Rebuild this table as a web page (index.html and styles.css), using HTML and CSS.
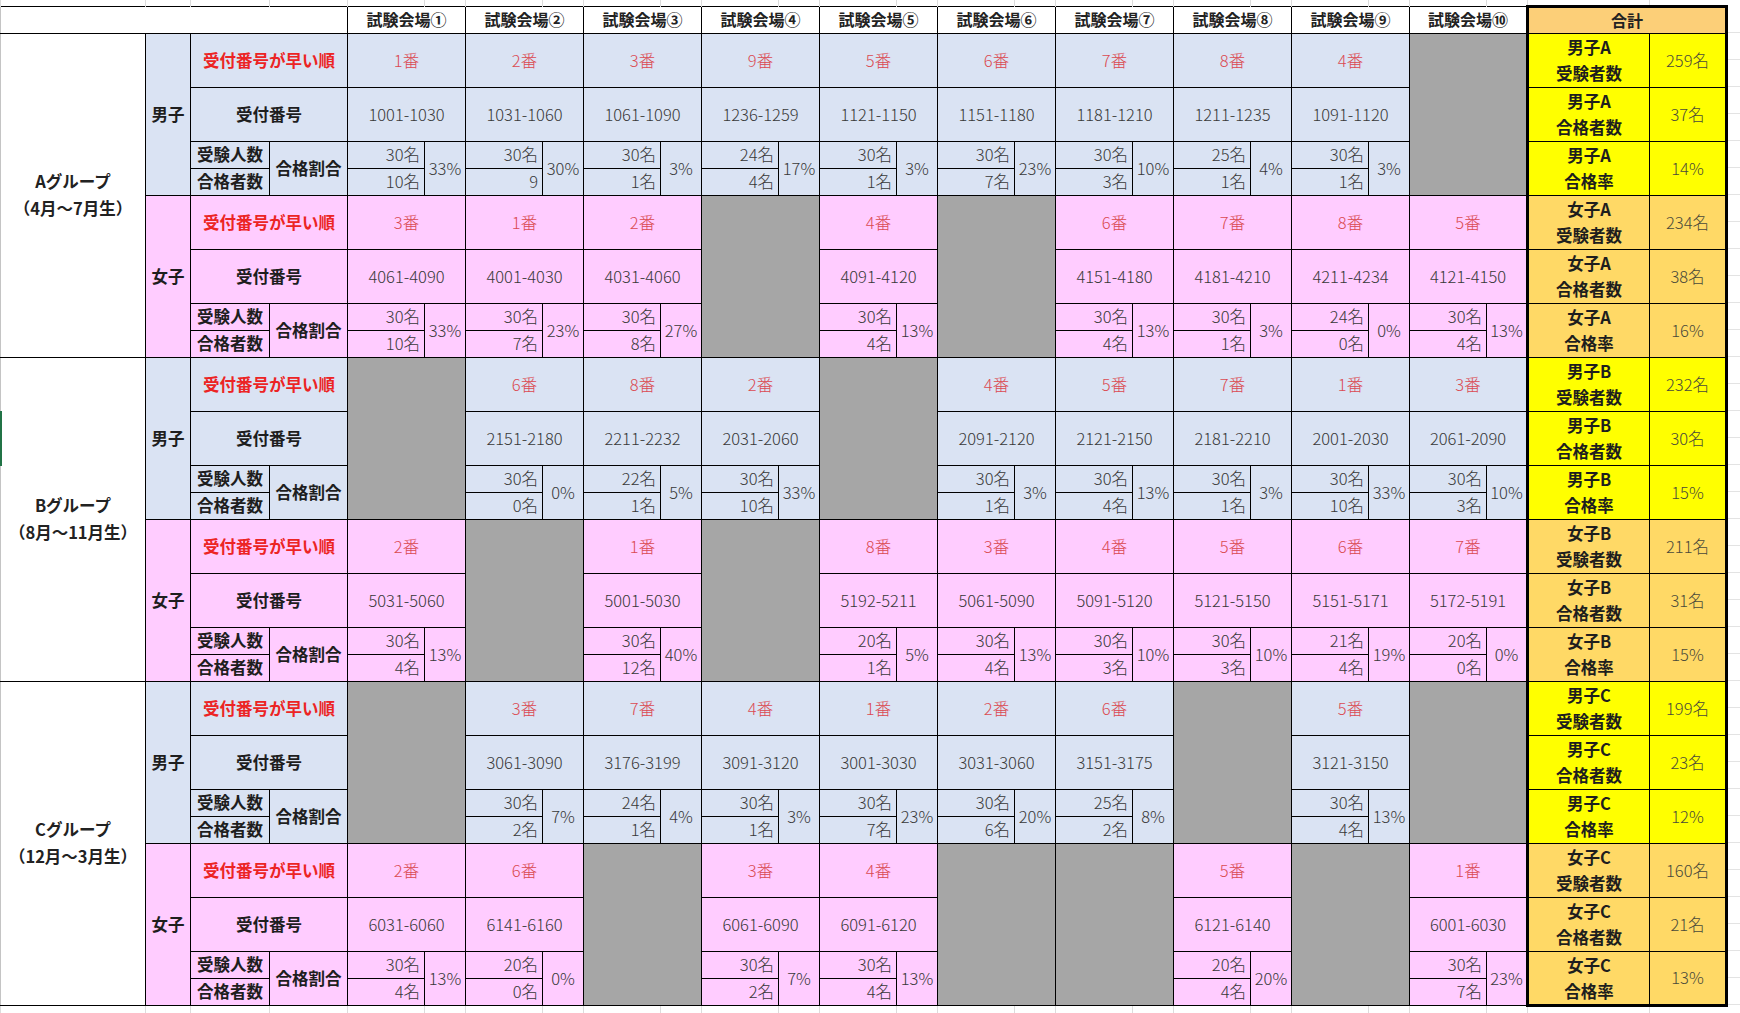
FILE: index.html
```html
<!DOCTYPE html>
<html lang="ja">
<head>
<meta charset="utf-8">
<title>試験会場 集計</title>
<link rel="stylesheet" href="styles.css">
</head>
<body>
<div class="rowmark"></div>
<table class="sheet">
<colgroup>
<col class="c-grp"><col class="c-sex"><col class="c-l1"><col class="c-l2">
<col class="c-n"><col class="c-p"><col class="c-n"><col class="c-p"><col class="c-n"><col class="c-p"><col class="c-n"><col class="c-p"><col class="c-n"><col class="c-p">
<col class="c-n"><col class="c-p"><col class="c-n"><col class="c-p"><col class="c-n"><col class="c-p"><col class="c-n"><col class="c-p"><col class="c-n"><col class="c-p">
<col class="c-tl"><col class="c-tv">
</colgroup>
<tbody>
<tr class="gl top"><td></td><td></td><td></td><td></td><td></td><td></td><td></td><td></td><td></td><td></td><td></td><td></td><td></td><td></td><td></td><td></td><td></td><td></td><td></td><td></td><td></td><td></td><td></td><td></td><td></td><td></td></tr>
<tr class="hd">
<td class="hcorner" colspan="4"></td>
<td class="hv" colspan="2">試験会場①</td><td class="hv" colspan="2">試験会場②</td><td class="hv" colspan="2">試験会場③</td><td class="hv" colspan="2">試験会場④</td><td class="hv" colspan="2">試験会場⑤</td>
<td class="hv" colspan="2">試験会場⑥</td><td class="hv" colspan="2">試験会場⑦</td><td class="hv" colspan="2">試験会場⑧</td><td class="hv" colspan="2">試験会場⑨</td><td class="hv" colspan="2">試験会場⑩</td>
<td class="htot" colspan="2">合計</td>
</tr>

<!-- A 男子 -->
<tr class="m h1">
<td class="grp" rowspan="8">Aグループ<br>（4月～7月生）</td>
<td class="sex" rowspan="4">男子</td>
<td class="lab red" colspan="2">受付番号が早い順</td>
<td class="rk" colspan="2">1番</td><td class="rk" colspan="2">2番</td><td class="rk" colspan="2">3番</td><td class="rk" colspan="2">9番</td><td class="rk" colspan="2">5番</td>
<td class="rk" colspan="2">6番</td><td class="rk" colspan="2">7番</td><td class="rk" colspan="2">8番</td><td class="rk" colspan="2">4番</td><td class="gy" colspan="2" rowspan="4"></td>
<td class="tl ty">男子A<br>受験者数</td><td class="tv ty">259名</td>
</tr>
<tr class="m h1">
<td class="lab" colspan="2">受付番号</td>
<td class="rng" colspan="2">1001-1030</td><td class="rng" colspan="2">1031-1060</td><td class="rng" colspan="2">1061-1090</td><td class="rng" colspan="2">1236-1259</td><td class="rng" colspan="2">1121-1150</td>
<td class="rng" colspan="2">1151-1180</td><td class="rng" colspan="2">1181-1210</td><td class="rng" colspan="2">1211-1235</td><td class="rng" colspan="2">1091-1120</td>
<td class="tl ty">男子A<br>合格者数</td><td class="tv ty">37名</td>
</tr>
<tr class="m h2">
<td class="lab sm">受験人数</td><td class="lab" rowspan="2">合格割合</td>
<td class="cnt">30名</td><td class="pct" rowspan="2">33%</td><td class="cnt">30名</td><td class="pct" rowspan="2">30%</td><td class="cnt">30名</td><td class="pct" rowspan="2">3%</td><td class="cnt">24名</td><td class="pct" rowspan="2">17%</td><td class="cnt">30名</td><td class="pct" rowspan="2">3%</td>
<td class="cnt">30名</td><td class="pct" rowspan="2">23%</td><td class="cnt">30名</td><td class="pct" rowspan="2">10%</td><td class="cnt">25名</td><td class="pct" rowspan="2">4%</td><td class="cnt">30名</td><td class="pct" rowspan="2">3%</td>
<td class="tl ty" rowspan="2">男子A<br>合格率</td><td class="tv ty" rowspan="2">14%</td>
</tr>
<tr class="m h2">
<td class="lab sm">合格者数</td>
<td class="cnt">10名</td><td class="cnt">9</td><td class="cnt">1名</td><td class="cnt">4名</td><td class="cnt">1名</td>
<td class="cnt">7名</td><td class="cnt">3名</td><td class="cnt">1名</td><td class="cnt">1名</td>
</tr>

<!-- A 女子 -->
<tr class="f h1">
<td class="sex" rowspan="4">女子</td>
<td class="lab red" colspan="2">受付番号が早い順</td>
<td class="rk" colspan="2">3番</td><td class="rk" colspan="2">1番</td><td class="rk" colspan="2">2番</td><td class="gy" colspan="2" rowspan="4"></td><td class="rk" colspan="2">4番</td>
<td class="gy" colspan="2" rowspan="4"></td><td class="rk" colspan="2">6番</td><td class="rk" colspan="2">7番</td><td class="rk" colspan="2">8番</td><td class="rk" colspan="2">5番</td>
<td class="tl to">女子A<br>受験者数</td><td class="tv to">234名</td>
</tr>
<tr class="f h1">
<td class="lab" colspan="2">受付番号</td>
<td class="rng" colspan="2">4061-4090</td><td class="rng" colspan="2">4001-4030</td><td class="rng" colspan="2">4031-4060</td><td class="rng" colspan="2">4091-4120</td>
<td class="rng" colspan="2">4151-4180</td><td class="rng" colspan="2">4181-4210</td><td class="rng" colspan="2">4211-4234</td><td class="rng" colspan="2">4121-4150</td>
<td class="tl to">女子A<br>合格者数</td><td class="tv to">38名</td>
</tr>
<tr class="f h2">
<td class="lab sm">受験人数</td><td class="lab" rowspan="2">合格割合</td>
<td class="cnt">30名</td><td class="pct" rowspan="2">33%</td><td class="cnt">30名</td><td class="pct" rowspan="2">23%</td><td class="cnt">30名</td><td class="pct" rowspan="2">27%</td><td class="cnt">30名</td><td class="pct" rowspan="2">13%</td>
<td class="cnt">30名</td><td class="pct" rowspan="2">13%</td><td class="cnt">30名</td><td class="pct" rowspan="2">3%</td><td class="cnt">24名</td><td class="pct" rowspan="2">0%</td><td class="cnt">30名</td><td class="pct" rowspan="2">13%</td>
<td class="tl to" rowspan="2">女子A<br>合格率</td><td class="tv to" rowspan="2">16%</td>
</tr>
<tr class="f h2">
<td class="lab sm">合格者数</td>
<td class="cnt">10名</td><td class="cnt">7名</td><td class="cnt">8名</td><td class="cnt">4名</td>
<td class="cnt">4名</td><td class="cnt">1名</td><td class="cnt">0名</td><td class="cnt">4名</td>
</tr>

<!-- B 男子 -->
<tr class="m h1">
<td class="grp" rowspan="8">Bグループ<br>（8月～11月生）</td>
<td class="sex" rowspan="4">男子</td>
<td class="lab red" colspan="2">受付番号が早い順</td>
<td class="gy" colspan="2" rowspan="4"></td><td class="rk" colspan="2">6番</td><td class="rk" colspan="2">8番</td><td class="rk" colspan="2">2番</td><td class="gy" colspan="2" rowspan="4"></td>
<td class="rk" colspan="2">4番</td><td class="rk" colspan="2">5番</td><td class="rk" colspan="2">7番</td><td class="rk" colspan="2">1番</td><td class="rk" colspan="2">3番</td>
<td class="tl ty">男子B<br>受験者数</td><td class="tv ty">232名</td>
</tr>
<tr class="m h1">
<td class="lab" colspan="2">受付番号</td>
<td class="rng" colspan="2">2151-2180</td><td class="rng" colspan="2">2211-2232</td><td class="rng" colspan="2">2031-2060</td>
<td class="rng" colspan="2">2091-2120</td><td class="rng" colspan="2">2121-2150</td><td class="rng" colspan="2">2181-2210</td><td class="rng" colspan="2">2001-2030</td><td class="rng" colspan="2">2061-2090</td>
<td class="tl ty">男子B<br>合格者数</td><td class="tv ty">30名</td>
</tr>
<tr class="m h2">
<td class="lab sm">受験人数</td><td class="lab" rowspan="2">合格割合</td>
<td class="cnt">30名</td><td class="pct" rowspan="2">0%</td><td class="cnt">22名</td><td class="pct" rowspan="2">5%</td><td class="cnt">30名</td><td class="pct" rowspan="2">33%</td>
<td class="cnt">30名</td><td class="pct" rowspan="2">3%</td><td class="cnt">30名</td><td class="pct" rowspan="2">13%</td><td class="cnt">30名</td><td class="pct" rowspan="2">3%</td><td class="cnt">30名</td><td class="pct" rowspan="2">33%</td><td class="cnt">30名</td><td class="pct" rowspan="2">10%</td>
<td class="tl ty" rowspan="2">男子B<br>合格率</td><td class="tv ty" rowspan="2">15%</td>
</tr>
<tr class="m h2">
<td class="lab sm">合格者数</td>
<td class="cnt">0名</td><td class="cnt">1名</td><td class="cnt">10名</td>
<td class="cnt">1名</td><td class="cnt">4名</td><td class="cnt">1名</td><td class="cnt">10名</td><td class="cnt">3名</td>
</tr>

<!-- B 女子 -->
<tr class="f h1">
<td class="sex" rowspan="4">女子</td>
<td class="lab red" colspan="2">受付番号が早い順</td>
<td class="rk" colspan="2">2番</td><td class="gy" colspan="2" rowspan="4"></td><td class="rk" colspan="2">1番</td><td class="gy" colspan="2" rowspan="4"></td><td class="rk" colspan="2">8番</td>
<td class="rk" colspan="2">3番</td><td class="rk" colspan="2">4番</td><td class="rk" colspan="2">5番</td><td class="rk" colspan="2">6番</td><td class="rk" colspan="2">7番</td>
<td class="tl to">女子B<br>受験者数</td><td class="tv to">211名</td>
</tr>
<tr class="f h1">
<td class="lab" colspan="2">受付番号</td>
<td class="rng" colspan="2">5031-5060</td><td class="rng" colspan="2">5001-5030</td><td class="rng" colspan="2">5192-5211</td>
<td class="rng" colspan="2">5061-5090</td><td class="rng" colspan="2">5091-5120</td><td class="rng" colspan="2">5121-5150</td><td class="rng" colspan="2">5151-5171</td><td class="rng" colspan="2">5172-5191</td>
<td class="tl to">女子B<br>合格者数</td><td class="tv to">31名</td>
</tr>
<tr class="f h2">
<td class="lab sm">受験人数</td><td class="lab" rowspan="2">合格割合</td>
<td class="cnt">30名</td><td class="pct" rowspan="2">13%</td><td class="cnt">30名</td><td class="pct" rowspan="2">40%</td><td class="cnt">20名</td><td class="pct" rowspan="2">5%</td>
<td class="cnt">30名</td><td class="pct" rowspan="2">13%</td><td class="cnt">30名</td><td class="pct" rowspan="2">10%</td><td class="cnt">30名</td><td class="pct" rowspan="2">10%</td><td class="cnt">21名</td><td class="pct" rowspan="2">19%</td><td class="cnt">20名</td><td class="pct" rowspan="2">0%</td>
<td class="tl to" rowspan="2">女子B<br>合格率</td><td class="tv to" rowspan="2">15%</td>
</tr>
<tr class="f h2">
<td class="lab sm">合格者数</td>
<td class="cnt">4名</td><td class="cnt">12名</td><td class="cnt">1名</td>
<td class="cnt">4名</td><td class="cnt">3名</td><td class="cnt">3名</td><td class="cnt">4名</td><td class="cnt">0名</td>
</tr>

<!-- C 男子 -->
<tr class="m h1">
<td class="grp" rowspan="8">Cグループ<br>（12月～3月生）</td>
<td class="sex" rowspan="4">男子</td>
<td class="lab red" colspan="2">受付番号が早い順</td>
<td class="gy" colspan="2" rowspan="4"></td><td class="rk" colspan="2">3番</td><td class="rk" colspan="2">7番</td><td class="rk" colspan="2">4番</td><td class="rk" colspan="2">1番</td>
<td class="rk" colspan="2">2番</td><td class="rk" colspan="2">6番</td><td class="gy" colspan="2" rowspan="4"></td><td class="rk" colspan="2">5番</td><td class="gy" colspan="2" rowspan="4"></td>
<td class="tl ty">男子C<br>受験者数</td><td class="tv ty">199名</td>
</tr>
<tr class="m h1">
<td class="lab" colspan="2">受付番号</td>
<td class="rng" colspan="2">3061-3090</td><td class="rng" colspan="2">3176-3199</td><td class="rng" colspan="2">3091-3120</td><td class="rng" colspan="2">3001-3030</td>
<td class="rng" colspan="2">3031-3060</td><td class="rng" colspan="2">3151-3175</td><td class="rng" colspan="2">3121-3150</td>
<td class="tl ty">男子C<br>合格者数</td><td class="tv ty">23名</td>
</tr>
<tr class="m h2">
<td class="lab sm">受験人数</td><td class="lab" rowspan="2">合格割合</td>
<td class="cnt">30名</td><td class="pct" rowspan="2">7%</td><td class="cnt">24名</td><td class="pct" rowspan="2">4%</td><td class="cnt">30名</td><td class="pct" rowspan="2">3%</td><td class="cnt">30名</td><td class="pct" rowspan="2">23%</td>
<td class="cnt">30名</td><td class="pct" rowspan="2">20%</td><td class="cnt">25名</td><td class="pct" rowspan="2">8%</td><td class="cnt">30名</td><td class="pct" rowspan="2">13%</td>
<td class="tl ty" rowspan="2">男子C<br>合格率</td><td class="tv ty" rowspan="2">12%</td>
</tr>
<tr class="m h2">
<td class="lab sm">合格者数</td>
<td class="cnt">2名</td><td class="cnt">1名</td><td class="cnt">1名</td><td class="cnt">7名</td>
<td class="cnt">6名</td><td class="cnt">2名</td><td class="cnt">4名</td>
</tr>

<!-- C 女子 -->
<tr class="f h1">
<td class="sex" rowspan="4">女子</td>
<td class="lab red" colspan="2">受付番号が早い順</td>
<td class="rk" colspan="2">2番</td><td class="rk" colspan="2">6番</td><td class="gy" colspan="2" rowspan="4"></td><td class="rk" colspan="2">3番</td><td class="rk" colspan="2">4番</td>
<td class="gy" colspan="2" rowspan="4"></td><td class="gy" colspan="2" rowspan="4"></td><td class="rk" colspan="2">5番</td><td class="gy" colspan="2" rowspan="4"></td><td class="rk" colspan="2">1番</td>
<td class="tl to">女子C<br>受験者数</td><td class="tv to">160名</td>
</tr>
<tr class="f h1">
<td class="lab" colspan="2">受付番号</td>
<td class="rng" colspan="2">6031-6060</td><td class="rng" colspan="2">6141-6160</td><td class="rng" colspan="2">6061-6090</td><td class="rng" colspan="2">6091-6120</td>
<td class="rng" colspan="2">6121-6140</td><td class="rng" colspan="2">6001-6030</td>
<td class="tl to">女子C<br>合格者数</td><td class="tv to">21名</td>
</tr>
<tr class="f h2">
<td class="lab sm">受験人数</td><td class="lab" rowspan="2">合格割合</td>
<td class="cnt">30名</td><td class="pct" rowspan="2">13%</td><td class="cnt">20名</td><td class="pct" rowspan="2">0%</td><td class="cnt">30名</td><td class="pct" rowspan="2">7%</td><td class="cnt">30名</td><td class="pct" rowspan="2">13%</td>
<td class="cnt">20名</td><td class="pct" rowspan="2">20%</td><td class="cnt">30名</td><td class="pct" rowspan="2">23%</td>
<td class="tl to last" rowspan="2">女子C<br>合格率</td><td class="tv to last" rowspan="2">13%</td>
</tr>
<tr class="f h2">
<td class="lab sm">合格者数</td>
<td class="cnt">4名</td><td class="cnt">0名</td><td class="cnt">2名</td><td class="cnt">4名</td>
<td class="cnt">4名</td><td class="cnt">7名</td>
</tr>

<tr class="gl bot"><td></td><td></td><td></td><td></td><td></td><td></td><td></td><td></td><td></td><td></td><td></td><td></td><td></td><td></td><td></td><td></td><td></td><td></td><td></td><td></td><td></td><td></td><td></td><td></td><td></td><td></td></tr>
</tbody>
</table>
</body>
</html>
```

FILE: styles.css
```css
html, body {
  margin: 0;
  padding: 0;
}

body {
  width: 1740px;
  height: 1013px;
  overflow: hidden;
  position: relative;
  background-color: #ffffff;
  background-image: repeating-linear-gradient(to bottom, transparent 0, transparent 26px, #e3e3e3 26px, #e3e3e3 27px);
  background-position: 0 6px;
  font-family: "Noto Sans CJK JP", "Noto Sans", sans-serif;
  color: #3a3a3a;
}

.rowmark {
  position: absolute;
  left: 0;
  top: 411px;
  width: 2px;
  height: 55px;
  background: #217346;
}

.sheet {
  border-collapse: collapse;
  table-layout: fixed;
  width: 1726px;
}

.c-grp { width: 145px; }
.c-sex { width: 45px; }
.c-l1 { width: 79px; }
.c-l2 { width: 78px; }
.c-n { width: 77px; }
.c-p { width: 41px; }
.c-tl { width: 122px; }
.c-tv { width: 77px; }

.sheet td {
  border: 1px solid #000;
  padding: 0;
  text-align: center;
  vertical-align: middle;
  font-size: 16.5px;
  line-height: 1.15;
  white-space: nowrap;
  overflow: hidden;
}

.sheet tr.top { height: 6px; }
.sheet tr.bot { height: 8px; }
.sheet tr.hd { height: 27px; }
.sheet tr.h1 { height: 54px; }
.sheet tr.h2 { height: 27px; }

.sheet tr.gl td {
  border-top: none;
  border-bottom: none;
  border-right: none;
  border-left: 1px solid #dcdcdc;
  background: transparent;
}

.m td { background: #dae3f3; }
.f td { background: #ffccff; }

.sheet td.hcorner { background: #fff; border-left: 1px solid #c4c4c4; }
.sheet td.hv {
  background: #fff;
  font-weight: 700;
  font-size: 16px;
  color: #222;
}
.sheet td.htot {
  background: #fccf78;
  font-weight: 700;
  font-size: 16px;
  color: #222;
  border: 3px solid #000;
  border-bottom-width: 1px;
}

.sheet td.grp {
  background: #fff;
  font-weight: 700;
  font-size: 16.5px;
  line-height: 27px;
  color: #222;
  border-left: 1px solid #c4c4c4;
}

.sheet td.sex,
.sheet td.lab {
  font-weight: 700;
  font-size: 16.5px;
  color: #1e1e1e;
}

.sheet td.lab.sm { line-height: 1; }
.sheet td.red { color: #ec2424; }

.sheet td.rk { color: #da4a52; font-size: 16.5px; font-weight: 300; }
.sheet td.rng { font-size: 16.5px; color: #383838; font-weight: 300; }
.sheet td.cnt {
  text-align: right;
  padding-right: 4px;
  line-height: 1;
  font-size: 16.5px;
  color: #383838;
  font-weight: 300;
}
.sheet td.pct { font-size: 16.5px; color: #383838; font-weight: 300; }

.sheet td.gy { background: #a6a6a6; }

.sheet td.tl {
  border-left: 3px solid #000;
  font-weight: 700;
  font-size: 16.5px;
  line-height: 26px;
  color: #1e1e1e;
}
.sheet td.tv {
  border-right: 3px solid #000;
  font-size: 16.5px;
  font-weight: 300;
  color: #4a4a3a;
}
.sheet td.last { border-bottom: 3px solid #000; }

.sheet td.ty { background: #ffff00; }
.sheet td.to { background: #ffd966; }
```
